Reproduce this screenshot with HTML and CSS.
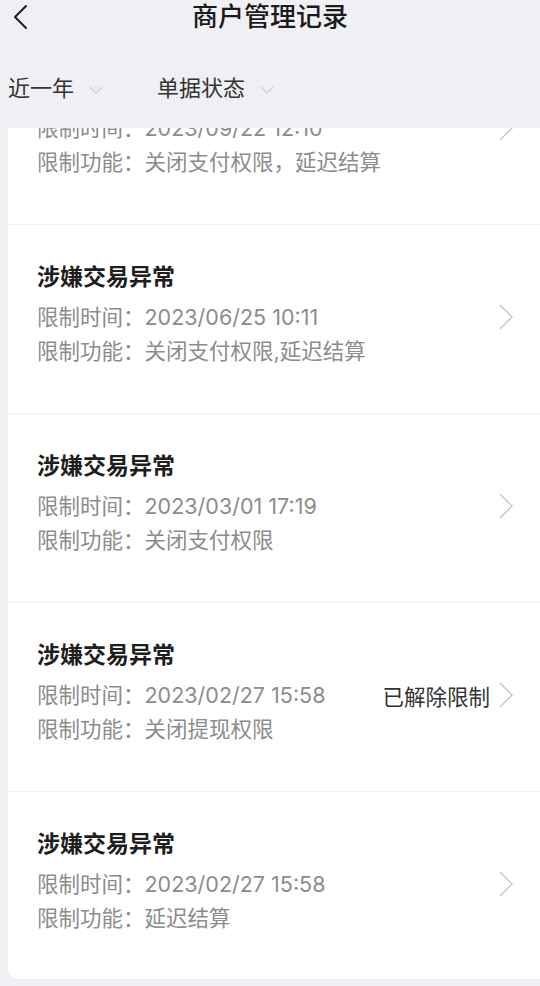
FILE: index.html
```html
<!DOCTYPE html>
<html lang="zh-CN">
<head>
    <meta charset="UTF-8">
    <meta name="viewport" content="width=device-width, initial-scale=1.0">
    <title>商户管理记录</title>
    <link rel="stylesheet" href="styles.css">
</head>
<body>
    <header class="nav">
        <svg class="back" width="18" height="26" viewBox="0 0 18 26">
            <polyline points="15,2 4,13 15,24" fill="none" stroke="#1e1e1e" stroke-width="2" stroke-linecap="round" stroke-linejoin="round"/>
        </svg>
        <h1>商户管理记录</h1>
    </header>
    <div class="filters">
        <div class="filter">
            <span>近一年</span>
            <svg width="14" height="8" viewBox="0 0 14 8"><polyline points="1,1 7,7 13,1" fill="none" stroke="#cfcfd3" stroke-width="1.2"/></svg>
        </div>
        <div class="filter">
            <span>单据状态</span>
            <svg width="14" height="8" viewBox="0 0 14 8"><polyline points="1,1 7,7 13,1" fill="none" stroke="#cfcfd3" stroke-width="1.2"/></svg>
        </div>
    </div>
    <div class="list">
        <div class="item first">
            <h3>涉嫌交易异常</h3>
            <div class="row">
                <p>限制时间：2023/09/22 12:10</p>
                <div class="side">
                    <svg class="arrow" width="16" height="28" viewBox="0 0 16 28"><polyline points="2,2 14,14 2,26" fill="none" stroke="#c8c8cc" stroke-width="1.5"/></svg>
                </div>
            </div>
            <p>限制功能：关闭支付权限，延迟结算</p>
        </div>
        <div class="item">
            <h3>涉嫌交易异常</h3>
            <div class="row">
                <p>限制时间：2023/06/25 10:11</p>
                <div class="side">
                    <svg class="arrow" width="16" height="28" viewBox="0 0 16 28"><polyline points="2,2 14,14 2,26" fill="none" stroke="#c8c8cc" stroke-width="1.5"/></svg>
                </div>
            </div>
            <p>限制功能：关闭支付权限,延迟结算</p>
        </div>
        <div class="item">
            <h3>涉嫌交易异常</h3>
            <div class="row">
                <p>限制时间：2023/03/01 17:19</p>
                <div class="side">
                    <svg class="arrow" width="16" height="28" viewBox="0 0 16 28"><polyline points="2,2 14,14 2,26" fill="none" stroke="#c8c8cc" stroke-width="1.5"/></svg>
                </div>
            </div>
            <p>限制功能：关闭支付权限</p>
        </div>
        <div class="item">
            <h3>涉嫌交易异常</h3>
            <div class="row">
                <p>限制时间：2023/02/27 15:58</p>
                <div class="side">
                    <span class="status">已解除限制</span>
                    <svg class="arrow" width="16" height="28" viewBox="0 0 16 28"><polyline points="2,2 14,14 2,26" fill="none" stroke="#c8c8cc" stroke-width="1.5"/></svg>
                </div>
            </div>
            <p>限制功能：关闭提现权限</p>
        </div>
        <div class="item">
            <h3>涉嫌交易异常</h3>
            <div class="row">
                <p>限制时间：2023/02/27 15:58</p>
                <div class="side">
                    <svg class="arrow" width="16" height="28" viewBox="0 0 16 28"><polyline points="2,2 14,14 2,26" fill="none" stroke="#c8c8cc" stroke-width="1.5"/></svg>
                </div>
            </div>
            <p>限制功能：延迟结算</p>
        </div>
    </div>
</body>
</html>
```

FILE: styles.css
```css
body {
    font-family: Inter, "Noto Sans CJK SC", sans-serif;
    margin: 0;
    padding: 0;
    background-color: #f0eff4;
    height: 986px;
    overflow: hidden;
}
.nav {
    position: relative;
    height: 34px;
    display: flex;
    align-items: center;
    justify-content: center;
}
.nav .back {
    position: absolute;
    left: 11px;
    top: 4px;
}
.nav h1 {
    margin: 0;
    font-size: 26px;
    font-weight: 500;
    line-height: 34px;
    color: #1a1a1a;
}
.filters {
    display: flex;
    padding: 36px 0 22px 8px;
}
.filter {
    display: flex;
    align-items: center;
    gap: 15px;
    margin-right: 54px;
    font-size: 22px;
    line-height: 36px;
    color: #333;
}
.filter svg {
    margin-top: 4px;
}
.list {
    margin-left: 8px;
    background-color: white;
    border-bottom-left-radius: 10px;
    height: 851px;
    overflow: hidden;
}
.item {
    height: 151px;
    padding: 37px 0 0 29px;
    border-bottom: 1px solid #f3f3f5;
}
.item.first {
    margin-top: -92px;
}
.item:last-child {
    border-bottom: none;
}
.item h3 {
    margin: 0 0 8px;
    font-size: 23px;
    font-weight: 600;
    line-height: 30px;
    color: #1e1e1e;
}
.item p {
    margin: 0;
    font-size: 21.5px;
    line-height: 34px;
    color: #8c8c8c;
}
.row {
    display: flex;
    justify-content: space-between;
    align-items: center;
}
.side {
    display: flex;
    align-items: center;
    gap: 8px;
    padding-right: 26px;
}
.status {
    font-size: 21.5px;
    color: #333;
}
```
